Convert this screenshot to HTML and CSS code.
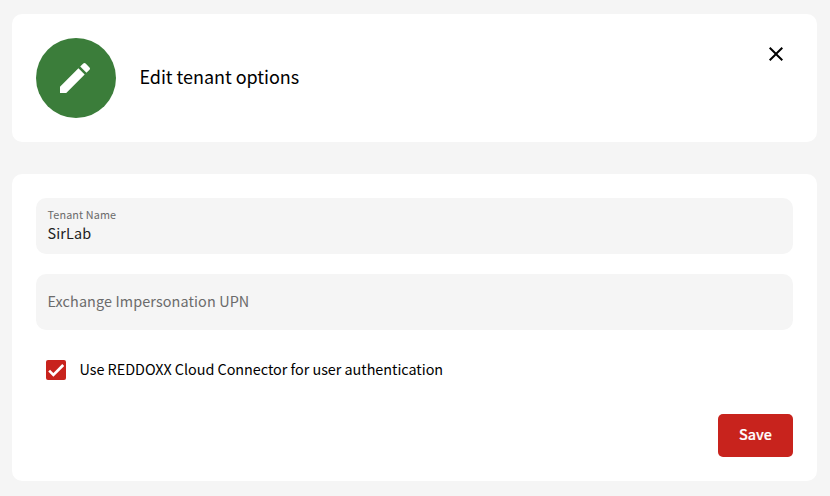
FILE: index.html
```html
<!DOCTYPE html>
<html lang="en">
<head>
<meta charset="utf-8">
<title>Edit tenant options</title>
<link rel="stylesheet" href="styles.css">
</head>
<body>
<header class="card header">
  <div class="badge">
    <svg class="pencil" viewBox="0 0 24 24"><path d="M3 17.25V21h3.75L17.81 9.94l-3.75-3.75L3 17.25zM20.71 7.04a1 1 0 0 0 0-1.41l-2.34-2.34a1 1 0 0 0-1.41 0l-1.83 1.83 3.75 3.75 1.83-1.83z"/></svg>
  </div>
  <h1 class="title">Edit tenant options</h1>
  <button class="close" aria-label="Close">
    <svg class="cross" viewBox="0 0 24 24"><path d="M19 6.41 17.59 5 12 10.59 6.41 5 5 6.41 10.59 12 5 17.59 6.41 19 12 13.41 17.59 19 19 17.59 13.41 12z"/></svg>
  </button>
</header>
<main class="card form">
  <div class="field">
    <span class="label">Tenant Name</span>
    <span class="value">SirLab</span>
  </div>
  <div class="field empty">
    <span class="placeholder">Exchange Impersonation UPN</span>
  </div>
  <div class="option">
    <span class="checkbox"><svg class="tick" viewBox="0 0 24 24"><path d="M1.73 12.91 8.1 19.28 22.79 4.59"/></svg></span>
    <span class="option-text">Use REDDOXX Cloud Connector for user authentication</span>
  </div>
  <button class="save">Save</button>
</main>
</body>
</html>
```
FILE: styles.css
```css
* { box-sizing: border-box; }
body {
  margin: 0;
  padding: 14px 13px 15px 12px;
  height: 496px;
  display: flex;
  flex-direction: column;
  gap: 32px;
  background: #f5f5f5;
  color: #000;
  font-family: "Noto Sans CJK SC", "Noto Sans", sans-serif;
  font-size: 14.4px;
}
button { border: 0; padding: 0; font-family: inherit; }
.card { background: #fff; border-radius: 10px; padding: 24px; }
.header { display: flex; height: 128px; }
.badge {
  width: 80px;
  height: 80px;
  border-radius: 50%;
  background: #3b7d3a;
  padding: 20px 19px;
}
.pencil { display: block; width: 40px; height: 40px; fill: #fff; }
.title {
  margin: 0 0 0 23.5px;
  flex: 1;
  font-size: 18px;
  font-weight: 400;
  line-height: 76px;
  letter-spacing: -.05px;
  white-space: nowrap;
}
.close { width: 34px; height: 32px; background: none; padding: 4px 4.6px 4px 5.4px; }
.cross { display: block; width: 24px; height: 24px; }
.form { height: 307px; display: flex; flex-direction: column; }
.field {
  height: 56px;
  border-radius: 10px;
  background: #f5f5f5;
  padding: 8px 12px 0 11.5px;
  margin-bottom: 20px;
  display: flex;
  flex-direction: column;
}
.label { font-size: 10.8px; line-height: 16px; letter-spacing: .13px; color: #6b6b6b; }
.value { margin-top: 1px; line-height: 20px; letter-spacing: .14px; color: #212121; }
.empty { padding-top: 17px; }
.placeholder { line-height: 20px; letter-spacing: .11px; color: #6b6b6b; }
.option { display: flex; gap: 13.5px; height: 20px; margin: 10px 0 0 10px; }
.checkbox { width: 20px; height: 20px; border-radius: 2px; background: #c8231d; padding: 2px; }
.tick { display: block; width: 16px; height: 16px; fill: none; stroke: #fff; stroke-width: 4; }
.option-text { margin-top: -1px; line-height: 20px; letter-spacing: -.035px; white-space: nowrap; }
.save {
  align-self: flex-end;
  margin-top: 34px;
  width: 75px;
  height: 43px;
  border-radius: 5px;
  background: #c8231d;
  color: #fff;
  font-size: 14.4px;
  font-weight: 500;
  -webkit-text-stroke: .2px #fff;
  line-height: 39px;
  padding-bottom: 4px;
}
```
